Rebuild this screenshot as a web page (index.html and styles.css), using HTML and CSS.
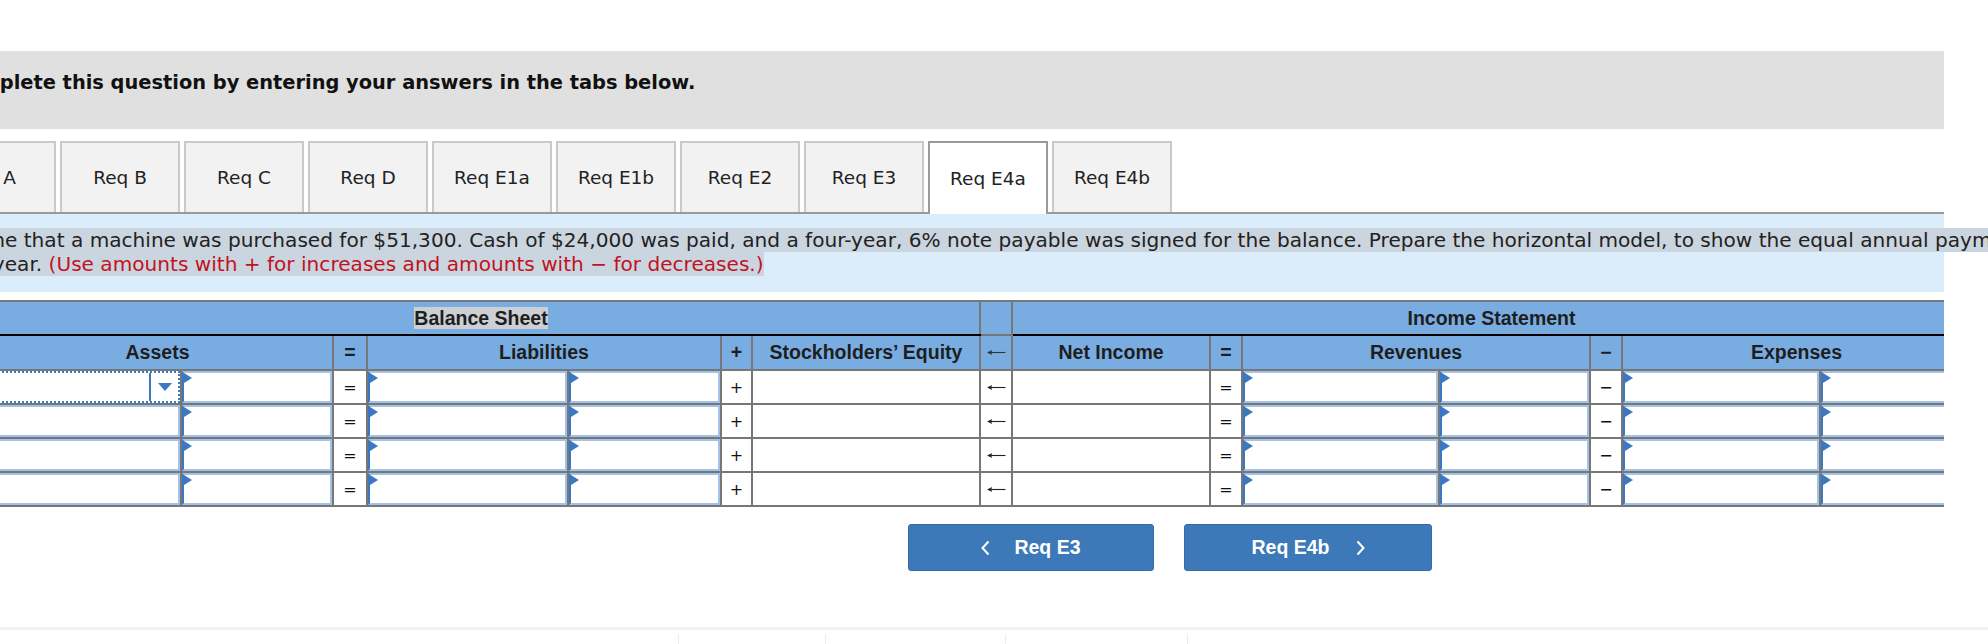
FILE: index.html
```html
<!DOCTYPE html>
<html>
<head>
<meta charset="utf-8">
<title>Req E4a</title>
<link rel="stylesheet" href="styles.css">
</head>
<body>
<div class="page">
  <div class="banner"><span>Complete this question by entering your answers in the tabs below.</span></div>
  <div class="tabbar">
    <div class="tab first">Req A</div>
    <div class="tab">Req B</div>
    <div class="tab">Req C</div>
    <div class="tab">Req D</div>
    <div class="tab">Req E1a</div>
    <div class="tab">Req E1b</div>
    <div class="tab">Req E2</div>
    <div class="tab">Req E3</div>
    <div class="tab active">Req E4a</div>
    <div class="tab">Req E4b</div>
  </div>
  <div class="question">
    <div class="line"><span class="hl">Assume that a machine was purchased for $51,300. Cash of $24,000 was paid, and a four-year, 6% note payable was signed for the balance. Prepare the horizontal model, to show the equal annual payments at the end of</span></div>
    <div class="line"><span class="hl">each year. <span class="red">(Use amounts with + for increases and amounts with − for decreases.)</span></span></div>
  </div>
  <div class="table-wrap">
    <table class="model">
      <colgroup>
        <col class="w199"><col class="w152"><col class="w34"><col class="w201"><col class="w153"><col class="w31"><col class="w228"><col class="w32"><col class="w198"><col class="w32"><col class="w197"><col class="w151"><col class="w32"><col class="w198"><col class="w151">
      </colgroup>
      <thead>
        <tr class="h1">
          <th colspan="7"><span class="sel-text">Balance Sheet</span></th>
          <th class="gap"></th>
          <th colspan="7">Income Statement</th>
        </tr>
        <tr class="h2">
          <th colspan="2">Assets</th>
          <th class="op">=</th>
          <th colspan="2">Liabilities</th>
          <th class="op">+</th>
          <th>Stockholders’ Equity</th>
          <th class="arr"><svg class="larr" width="20" height="9" viewBox="0 0 20 9" role="img" aria-label="←"><path d="M2 4.5 H19.5" stroke="#333" stroke-width="1.1" fill="none"/><path d="M1 4.5 L6.2 2 L5.2 4.5 L6.2 7 Z" fill="#333"/></svg></th>
          <th>Net Income</th>
          <th class="op">=</th>
          <th colspan="2">Revenues</th>
          <th class="op">−</th>
          <th colspan="2">Expenses</th>
        </tr>
      </thead>
      <tbody>
        <tr>
          <td><div class="sel"><span class="caret"><i></i></span></div></td>
          <td><div class="inp"></div></td>
          <td class="sym">=</td>
          <td><div class="inp"></div></td>
          <td><div class="inp"></div></td>
          <td class="sym">+</td>
          <td></td>
          <td class="sym arr"><svg class="larr" width="20" height="9" viewBox="0 0 20 9" role="img" aria-label="←"><path d="M2 4.5 H19.5" stroke="#222" stroke-width="1.1" fill="none"/><path d="M1 4.5 L6.2 2 L5.2 4.5 L6.2 7 Z" fill="#222"/></svg></td>
          <td></td>
          <td class="sym">=</td>
          <td><div class="inp"></div></td>
          <td><div class="inp"></div></td>
          <td class="sym">−</td>
          <td><div class="inp"></div></td>
          <td><div class="inp"></div></td>
        </tr>
        <tr>
          <td><div class="inp"></div></td>
          <td><div class="inp"></div></td>
          <td class="sym">=</td>
          <td><div class="inp"></div></td>
          <td><div class="inp"></div></td>
          <td class="sym">+</td>
          <td></td>
          <td class="sym arr"><svg class="larr" width="20" height="9" viewBox="0 0 20 9" role="img" aria-label="←"><path d="M2 4.5 H19.5" stroke="#222" stroke-width="1.1" fill="none"/><path d="M1 4.5 L6.2 2 L5.2 4.5 L6.2 7 Z" fill="#222"/></svg></td>
          <td></td>
          <td class="sym">=</td>
          <td><div class="inp"></div></td>
          <td><div class="inp"></div></td>
          <td class="sym">−</td>
          <td><div class="inp"></div></td>
          <td><div class="inp"></div></td>
        </tr>
        <tr>
          <td><div class="inp"></div></td>
          <td><div class="inp"></div></td>
          <td class="sym">=</td>
          <td><div class="inp"></div></td>
          <td><div class="inp"></div></td>
          <td class="sym">+</td>
          <td></td>
          <td class="sym arr"><svg class="larr" width="20" height="9" viewBox="0 0 20 9" role="img" aria-label="←"><path d="M2 4.5 H19.5" stroke="#222" stroke-width="1.1" fill="none"/><path d="M1 4.5 L6.2 2 L5.2 4.5 L6.2 7 Z" fill="#222"/></svg></td>
          <td></td>
          <td class="sym">=</td>
          <td><div class="inp"></div></td>
          <td><div class="inp"></div></td>
          <td class="sym">−</td>
          <td><div class="inp"></div></td>
          <td><div class="inp"></div></td>
        </tr>
        <tr>
          <td><div class="inp"></div></td>
          <td><div class="inp"></div></td>
          <td class="sym">=</td>
          <td><div class="inp"></div></td>
          <td><div class="inp"></div></td>
          <td class="sym">+</td>
          <td></td>
          <td class="sym arr"><svg class="larr" width="20" height="9" viewBox="0 0 20 9" role="img" aria-label="←"><path d="M2 4.5 H19.5" stroke="#222" stroke-width="1.1" fill="none"/><path d="M1 4.5 L6.2 2 L5.2 4.5 L6.2 7 Z" fill="#222"/></svg></td>
          <td></td>
          <td class="sym">=</td>
          <td><div class="inp"></div></td>
          <td><div class="inp"></div></td>
          <td class="sym">−</td>
          <td><div class="inp"></div></td>
          <td><div class="inp"></div></td>
        </tr>
      </tbody>
    </table>
  </div>
  <div class="nav">
    <div class="btn prev"><svg class="chev" width="9" height="16" viewBox="0 0 9 16"><polyline points="7.5,1.5 1.5,8 7.5,14.5" fill="none" stroke="#fff" stroke-width="2"/></svg><span>Req E3</span></div>
    <div class="btn next"><span>Req E4b</span><svg class="chev" width="9" height="16" viewBox="0 0 9 16"><polyline points="1.5,1.5 7.5,8 1.5,14.5" fill="none" stroke="#fff" stroke-width="2"/></svg></div>
  </div>
</div>
<div class="footer">
  <div class="flink first"></div>
  <div class="flink w146"></div>
  <div class="flink w179"></div>
  <div class="flink w181"></div>
  <div class="flink last"></div>
</div>
</body>
</html>
```

FILE: styles.css
```css
html, body {
  margin: 0;
  padding: 0;
  background: #fff;
  overflow: hidden;
}
body {
  width: 1988px;
  height: 644px;
  font-family: "DejaVu Sans", Verdana, sans-serif;
  color: #222;
}
.page {
  margin-left: -64px;
  width: 2008px;
  padding-top: 51px;
}
.banner {
  box-sizing: border-box;
  height: 78px;
  background: #e0e0e0;
  display: flex;
  align-items: center;
  padding-left: 16px;
  padding-bottom: 16px;
  font-weight: bold;
  font-size: 19.4px;
  color: #111;
  white-space: nowrap;
}
.tabbar {
  margin-top: 12px;
  margin-left: -14px;
  display: flex;
  align-items: flex-start;
  gap: 4px;
  height: 71px;
  border-bottom: 2px solid #9a9a9a;
}
.tab {
  box-sizing: border-box;
  width: 120px;
  height: 71px;
  flex: none;
  background: #f2f2f2;
  border: 2px solid #c9c9c9;
  border-bottom: none;
  display: flex;
  align-items: center;
  justify-content: center;
  font-size: 18.5px;
  color: #222;
}
.tab.first {
  width: 134px;
}
.tab.active {
  background: #fff;
  border-color: #9a9a9a;
  height: 73px;
  margin-bottom: -2px;
}
.question {
  box-sizing: border-box;
  height: 78px;
  background: #dbecfa;
  padding-top: 14px;
  padding-left: 2px;
  font-size: 20.1px;
}
.line {
  white-space: nowrap;
  height: 24px;
}
.hl {
  display: inline-block;
  background: #cbd5df;
  line-height: 24px;
  color: #222;
}
.red {
  color: #c0131f;
}
.table-wrap {
  margin-top: 8px;
  overflow: hidden;
  padding-left: 45px;
}
.model {
  border-collapse: collapse;
  table-layout: fixed;
  width: 1989px;
}
.w199 { width: 199px; }
.w152 { width: 152px; }
.w34 { width: 34px; }
.w201 { width: 201px; }
.w153 { width: 153px; }
.w31 { width: 31px; }
.w228 { width: 228px; }
.w32 { width: 32px; }
.w198 { width: 198px; }
.w197 { width: 197px; }
.w151 { width: 151px; }
.model th, .model td {
  border: 2px solid #777;
  padding: 0;
}
.model th {
  background: #79ade1;
  font-family: "Liberation Sans", Arial, sans-serif;
  font-weight: bold;
  font-size: 19.5px;
  color: #1e1e1e;
  text-align: center;
  white-space: nowrap;
}
.h1 { height: 34px; }
.h2 { height: 35px; }
.h1 th {
  border-bottom: 2px solid #000;
}
.h1 th.gap {
  border-bottom: 2px solid #777;
}
.sel-text {
  background: #ccd0d5;
}
.larr {
  display: block;
  margin: 0 auto;
}
.model td {
  background: #fff;
  height: 32px;
}
.model td.sym {
  text-align: center;
  font-family: "DejaVu Sans", Verdana, sans-serif;
  font-size: 16px;
  color: #111;
}
.inp {
  position: relative;
  box-sizing: border-box;
  height: 32px;
  background: #fff;
  border: 2px solid #a3c2e8;
  border-left: 2px solid #3a78c2;
}
.inp::before {
  content: "";
  position: absolute;
  left: 0;
  top: 0;
  border-left: 8px solid #3a78c2;
  border-top: 5px solid transparent;
  border-bottom: 5px solid transparent;
}
.sel {
  box-sizing: border-box;
  height: 32px;
  border: 2px dotted #3a78c2;
  display: flex;
  justify-content: flex-end;
}
.caret {
  width: 27px;
  border-left: 2px solid #3a78c2;
  display: flex;
  align-items: center;
  justify-content: center;
}
.caret i {
  width: 0;
  height: 0;
  border-top: 8px solid #3a78c2;
  border-left: 7px solid transparent;
  border-right: 7px solid transparent;
}
.nav {
  margin-top: 17px;
  padding-left: 972px;
  display: flex;
  gap: 30px;
}
.btn {
  box-sizing: border-box;
  width: 246px;
  height: 47px;
  background: #3d78b8;
  border: 1px solid #356ca6;
  border-radius: 3px;
  color: #fff;
  font-family: "Liberation Sans", Arial, sans-serif;
  font-weight: bold;
  font-size: 19.5px;
  display: flex;
  align-items: center;
  justify-content: center;
}
.btn.prev { gap: 24px; }
.btn.next { gap: 26px; width: 248px; }
.chev { display: block; }
.footer {
  margin-top: 56px;
  border-top: 3px solid #f1f1f1;
  height: 20px;
  display: flex;
}
.flink {
  margin-top: 4px;
  height: 16px;
  border-left: 1px solid #ececec;
}
.flink.first { width: 678px; border-left: none; }
.w146 { width: 146px; }
.w179 { width: 179px; }
.w181 { width: 181px; }
.flink.last { flex: 1; }
```
